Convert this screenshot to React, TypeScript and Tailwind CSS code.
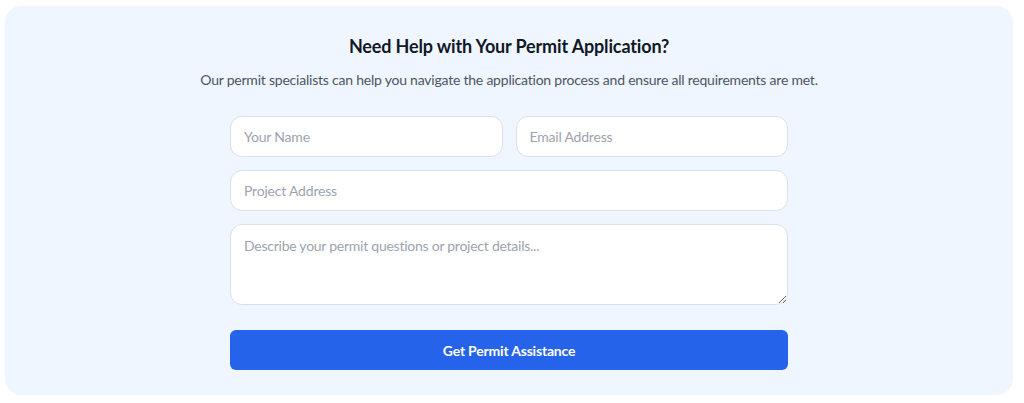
import React from "react";

export default function App() {
  return (
    <div className="w-[1024px] h-[403px] bg-white pt-[6px] pl-[5px]" style={{ fontFamily: 'Lato, "Noto Sans", sans-serif' }}>
      <div className="w-[1008px] h-[389px] rounded-2xl bg-[#eff6ff] flex flex-col items-center pt-[29px]">
        <h2 className="text-[18px] leading-[22px] font-bold tracking-[-0.15px] text-[#111827]">Need Help with Your Permit Application?</h2>
        <p className="mt-[13px] text-[14px] leading-[20px] tracking-[-0.22px] text-[#4b5563]">
          Our permit specialists can help you navigate the application process and ensure all requirements are met.
        </p>
        <form className="mt-[26px] w-[558px] flex flex-col gap-[13px]" onSubmit={(e) => e.preventDefault()}>
          <div className="grid grid-cols-2 gap-[13px]">
            <input placeholder="Your Name" className="h-[41px] rounded-xl border border-[#dbe1ea] bg-white px-[13px] text-[14px] tracking-[-0.2px] text-[#111827] placeholder:text-[#9ca3af] outline-none" />
            <input placeholder="Email Address" className="h-[41px] rounded-xl border border-[#dbe1ea] bg-white px-[13px] text-[14px] tracking-[-0.2px] text-[#111827] placeholder:text-[#9ca3af] outline-none" />
          </div>
          <input placeholder="Project Address" className="h-[41px] rounded-xl border border-[#dbe1ea] bg-white px-[13px] text-[14px] tracking-[-0.2px] text-[#111827] placeholder:text-[#9ca3af] outline-none" />
          <textarea placeholder="Describe your permit questions or project details..." className="h-[81px] rounded-xl border border-[#dbe1ea] bg-white px-[13px] py-[11px] text-[14px] leading-[20px] tracking-[-0.25px] text-[#111827] placeholder:text-[#9ca3af] outline-none" />
          <button type="submit" className="mt-[12px] h-[40px] rounded-md bg-[#2563eb] text-white text-[14px] font-bold tracking-[-0.2px]">
            Get Permit Assistance
          </button>
        </form>
      </div>
    </div>
  );
}
